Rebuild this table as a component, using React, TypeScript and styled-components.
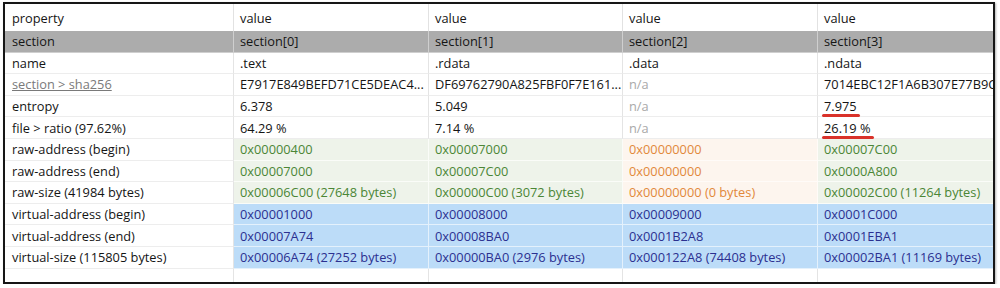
import * as React from "react";
import styled, { createGlobalStyle, css } from "styled-components";

type Tone = "plain" | "muted" | "link" | "raw" | "rawZero" | "virt";

type Value = { text: string; tone?: Tone; mark?: boolean };

type Entry = { label: string; labelTone?: Tone; values: Value[] };

const GlobalStyle = createGlobalStyle`
  html, body {
    margin: 0;
    padding: 0;
    background: #fff;
  }
  body {
    font-family: "Open Sans", "Noto Sans", sans-serif;
  }
`;

const v = (text: string, tone: Tone = "plain", mark = false): Value => ({ text, tone, mark });

const entries: Entry[] = [
  { label: "name", values: [v(".text"), v(".rdata"), v(".data"), v(".ndata")] },
  {
    label: "section > sha256",
    labelTone: "link",
    values: [
      v("E7917E849BEFD71CE5DEAC4..."),
      v("DF69762790A825FBF0F7E161..."),
      v("n/a", "muted"),
      v("7014EBC12F1A6B307E77B9C"),
    ],
  },
  { label: "entropy", values: [v("6.378"), v("5.049"), v("n/a", "muted"), v("7.975", "plain", true)] },
  {
    label: "file > ratio (97.62%)",
    values: [v("64.29 %"), v("7.14 %"), v("n/a", "muted"), v("26.19 %", "plain", true)],
  },
  {
    label: "raw-address (begin)",
    values: [v("0x00000400", "raw"), v("0x00007000", "raw"), v("0x00000000", "rawZero"), v("0x00007C00", "raw")],
  },
  {
    label: "raw-address (end)",
    values: [v("0x00007000", "raw"), v("0x00007C00", "raw"), v("0x00000000", "rawZero"), v("0x0000A800", "raw")],
  },
  {
    label: "raw-size (41984 bytes)",
    values: [
      v("0x00006C00 (27648 bytes)", "raw"),
      v("0x00000C00 (3072 bytes)", "raw"),
      v("0x00000000 (0 bytes)", "rawZero"),
      v("0x00002C00 (11264 bytes)", "raw"),
    ],
  },
  {
    label: "virtual-address (begin)",
    values: [v("0x00001000", "virt"), v("0x00008000", "virt"), v("0x00009000", "virt"), v("0x0001C000", "virt")],
  },
  {
    label: "virtual-address (end)",
    values: [v("0x00007A74", "virt"), v("0x00008BA0", "virt"), v("0x0001B2A8", "virt"), v("0x0001EBA1", "virt")],
  },
  {
    label: "virtual-size (115805 bytes)",
    values: [
      v("0x00006A74 (27252 bytes)", "virt"),
      v("0x00000BA0 (2976 bytes)", "virt"),
      v("0x000122A8 (74408 bytes)", "virt"),
      v("0x00002BA1 (11169 bytes)", "virt"),
    ],
  },
];

const toneStyles: Record<Tone, ReturnType<typeof css>> = {
  plain: css`
    color: #151515;
  `,
  muted: css`
    color: #a9a9a9;
  `,
  link: css`
    color: #7a7a7a;
    text-decoration: underline;
  `,
  raw: css`
    background: #eef3ea;
    color: #4b8636;
    border-color: #fafcf8;
  `,
  rawZero: css`
    background: #fdf5ee;
    color: #e2883a;
    border-color: #fffbf8;
  `,
  virt: css`
    background: #bcdcf8;
    color: #2b3090;
    border-color: #e4f1fc;
  `,
};

const Frame = styled.div`
  margin: 2px 0 0 3px;
  width: 988px;
  height: 278px;
  border: 2px solid #161616;
  box-shadow: 1px 1px 2px rgba(0, 0, 0, 0.3);
  overflow: hidden;
  font: 400 12.8px "Open Sans", "Noto Sans", sans-serif;
  color: #151515;
`;

const Row = styled.div<{ $h: number; $kind?: "head" | "section" | "data" | "empty" }>`
  display: grid;
  grid-template-columns: 229px 195px 194px 195px 175px;
  height: ${(p) => p.$h}px;
  background: ${(p) => (p.$kind === "section" ? "#acacac" : "#fff")};
`;

const Cell = styled.div<{ $tone?: Tone; $first?: boolean; $mark?: boolean; $line?: string; $noBottom?: boolean }>`
  display: flex;
  align-items: center;
  box-sizing: border-box;
  padding-left: ${(p) => (p.$first ? 7 : 6)}px;
  white-space: nowrap;
  overflow: ${(p) => (p.$mark ? "visible" : "hidden")};
  border-right: 1px solid ${(p) => p.$line ?? "#e4e4e4"};
  border-bottom: ${(p) => (p.$noBottom ? "none" : `1px solid ${p.$line ?? "#ededed"}`)};
  &:last-child {
    border-right: none;
  }
  ${(p) => toneStyles[p.$tone ?? "plain"]}
`;

const Marked = styled.span`
  position: relative;
  &::after {
    content: "";
    position: absolute;
    left: -2px;
    right: -3px;
    bottom: -2px;
    height: 3px;
    border-radius: 2px;
    background: #d9322a;
  }
`;

const ROW_H = 21.6;

export default function App() {
  return (
    <>
      <GlobalStyle />
      <Frame>
        <Row $h={27} $kind="head">
          <Cell $first $noBottom $line="#e2e2e2">property</Cell>
          {[0, 1, 2, 3].map((i) => (
            <Cell key={i} $noBottom $line="#e2e2e2">
              value
            </Cell>
          ))}
        </Row>
        <Row $h={ROW_H} $kind="section">
          <Cell $first $line="#cfcfcf">
            section
          </Cell>
          {[0, 1, 2, 3].map((i) => (
            <Cell key={i} $line="#cfcfcf">
              {`section[${i}]`}
            </Cell>
          ))}
        </Row>
        {entries.map((e) => (
          <Row key={e.label} $h={ROW_H} $kind="data">
            <Cell $first $tone={e.labelTone}>
              {e.label}
            </Cell>
            {e.values.map((val, i) => (
              <Cell key={i} $tone={val.tone} $mark={val.mark}>
                {val.mark ? <Marked>{val.text}</Marked> : val.text}
              </Cell>
            ))}
          </Row>
        ))}
        <Row $h={14} $kind="empty">
          {[0, 1, 2, 3, 4].map((i) => (
            <Cell key={i} $noBottom />
          ))}
        </Row>
      </Frame>
    </>
  );
}
